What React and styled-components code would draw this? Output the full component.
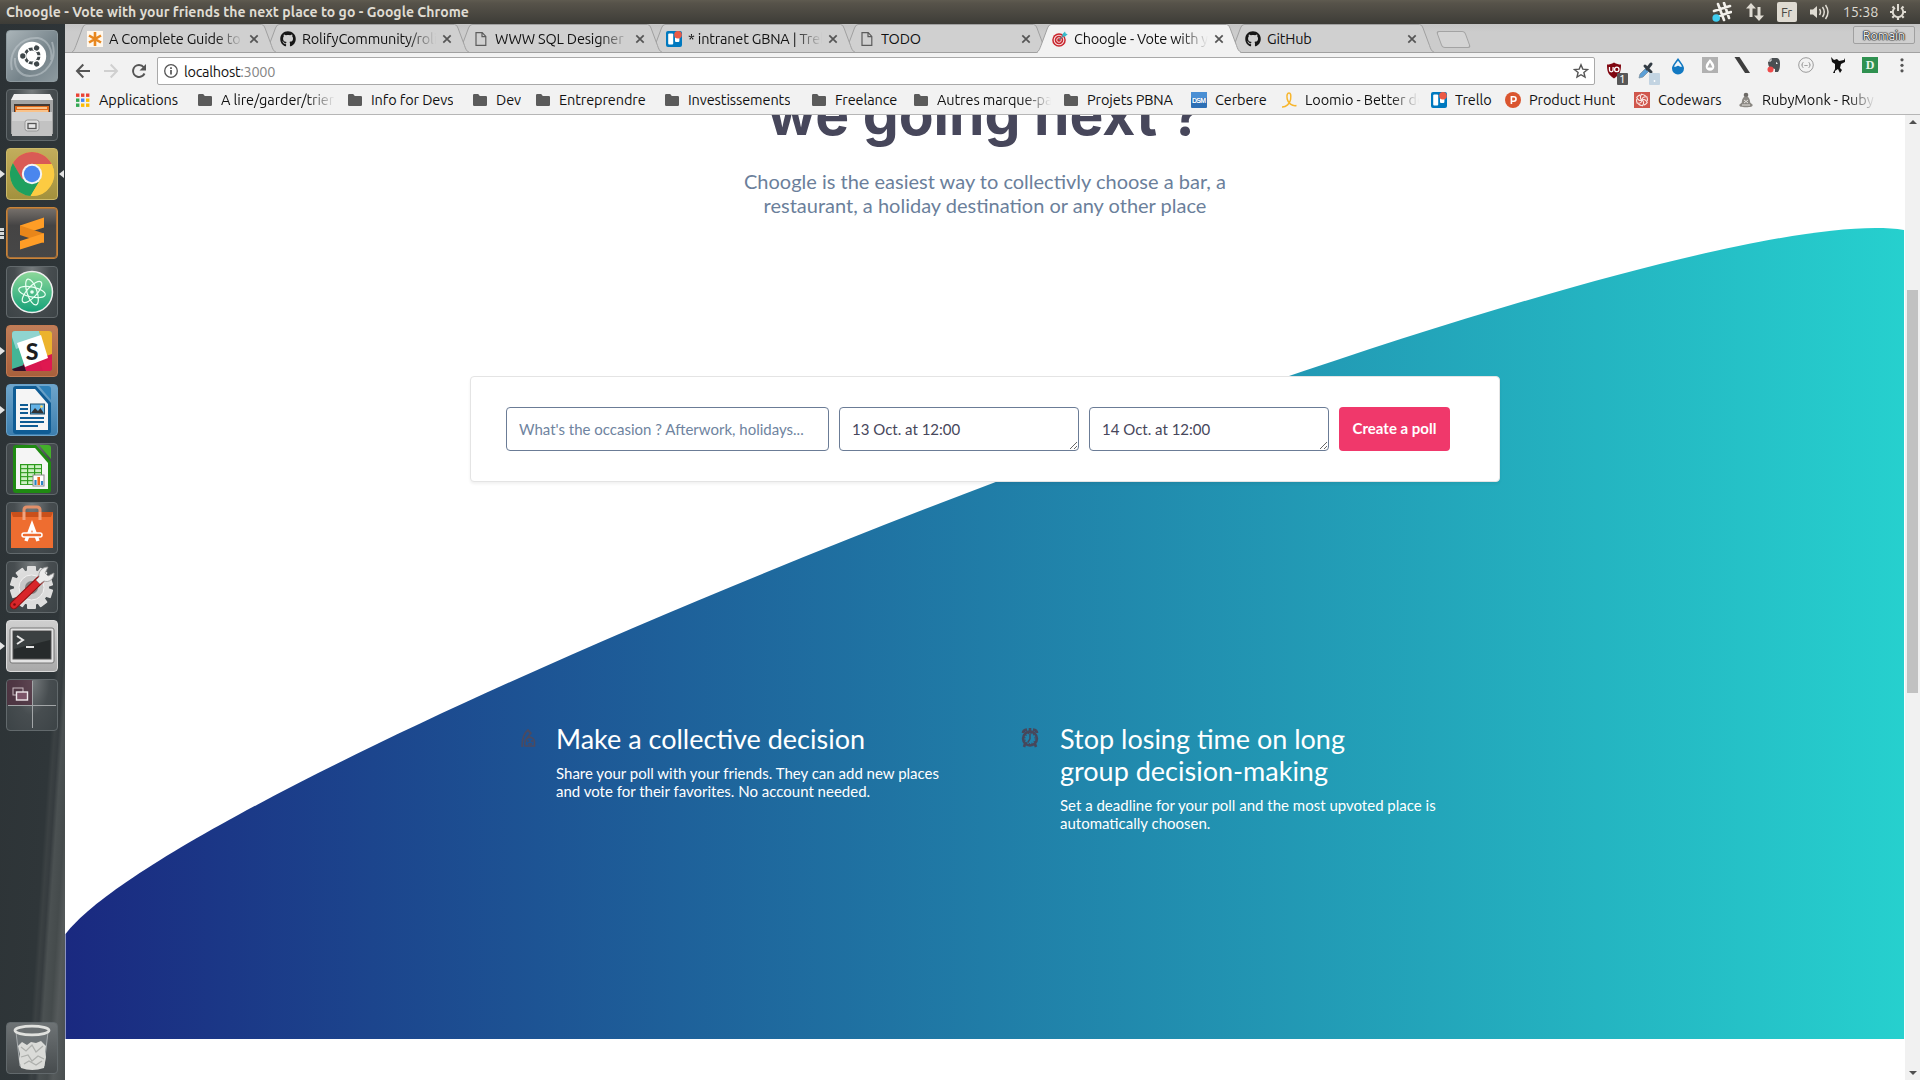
import React from "react";
import styled, { createGlobalStyle, css } from "styled-components";
import { FaGithub } from "react-icons/fa";

const ui = `"Ubuntu", "Noto Sans", "Open Sans", sans-serif`;
const body = `"Lato", "Open Sans", sans-serif`;

const Global = createGlobalStyle`
  * { box-sizing: border-box; }
  body { margin: 0; overflow: hidden; background: #fff; }
  h1, h2, p { margin: 0; font-weight: 400; }
  svg { display: block; flex: none; }
`;

const Screen = styled.div`
  width: 1920px;
  height: 1080px;
  display: flex;
  flex-direction: column;
  overflow: hidden;
  font-family: ${ui};
`;

/* ---------- top panel ---------- */
const Panel = styled.header`
  height: 24px;
  flex: none;
  display: flex;
  align-items: center;
  justify-content: space-between;
  padding: 0 7px 0 6px;
  background: linear-gradient(#5f5b50 0, #57534a 3px, #3d3c37 100%);
  color: #dfdbd2;
`;
const WindowTitle = styled.div`
  font-size: 14px;
  line-height: 24px;
  font-weight: 700;
  letter-spacing: 0.04px;
  white-space: nowrap;
`;
const Indicators = styled.div`
  display: flex;
  align-items: center;
  height: 24px;
`;
const Indicator = styled.div`
  width: ${(p) => p.$w}px;
  display: flex;
  justify-content: center;
  font-size: 14.5px;
  letter-spacing: -0.2px;
  line-height: 24px;
`;
const Lang = styled.span`
  width: 20px;
  height: 20px;
  border-radius: 2px;
  background: #dfdbd2;
  color: #4a4843;
  font-size: 13px;
  line-height: 20px;
  text-align: center;
`;

const Desktop = styled.div`
  flex: 1;
  min-height: 0;
  display: flex;
`;

/* ---------- launcher ---------- */
const Launcher = styled.nav`
  width: 65px;
  flex: none;
  display: flex;
  flex-direction: column;
  gap: 7px;
  padding: 6px 0;
  background: linear-gradient(93.86deg, #2c3235 0, #2f3639 98px, #3b4143 102px, #363c3f 106px, #4b5152 110px, #454b4c 118px, #555a5b 124px, #484e4f 136px);
`;
const Slot = styled.div`
  height: 52px;
  flex: none;
  display: grid;
  grid-template-columns: 6px 52px 7px;
  align-items: center;
  ${(p) => p.$last && css`margin-top: auto;`}
`;
const Tile = styled.div`
  width: 52px;
  height: 52px;
  border-radius: 4px;
  border: 1px solid ${(p) => p.$edge || "#62696c"};
  background: ${(p) => p.$bg || "radial-gradient(ellipse at 50% 0, #777c7e 0, #474d50 50%, #3c4346 100%)"};
  display: flex;
  align-items: center;
  justify-content: center;
  overflow: hidden;
`;
const Mark = styled.i`
  width: 0;
  height: 0;
  border: 4px solid transparent;
  ${(p) => (p.$side === "left" ? "border-left: 5px solid #e4e4e4; border-right: 0;" : "border-right: 5px solid #e4e4e4; border-left: 0; justify-self: center;")}
`;
const Ticks = styled.i`
  width: 4px;
  height: 11px;
  background: repeating-linear-gradient(#d5d8d9 0 3px, transparent 3px 4px);
`;

/* ---------- browser ---------- */
const Browser = styled.main`
  flex: 1;
  min-width: 0;
  display: flex;
  flex-direction: column;
  background: #f2f2f2;
`;
const TabStrip = styled.div`
  height: 29px;
  flex: none;
  display: flex;
  padding-left: 6px;
  background: linear-gradient(#c4c4c4, #cccccc 8px);
  box-shadow: inset 0 -1px 0 #a2a2a2;
`;
const TabBox = styled.div`
  width: 206px;
  height: 29px;
  flex: none;
  margin-right: -13px;
  display: grid;
  grid-template-areas: "all";
  z-index: ${(p) => p.$z};
`;
const TabShape = styled.svg`
  grid-area: all;
`;
const TabContent = styled.div`
  grid-area: all;
  display: flex;
  align-items: center;
  padding: 1px 0 0 16px;
  color: #111;
`;
const TabLabel = styled.span`
  width: 134px;
  margin-left: 6px;
  font-size: 14.5px;
  letter-spacing: ${(p) => p.$ls || "-0.2px"};
  line-height: 26px;
  white-space: nowrap;
  overflow: hidden;
  ${(p) => p.$fade && css`mask-image: linear-gradient(90deg, #000 106px, transparent 134px);`}
`;
const TabClose = styled.span`
  margin-left: 6px;
`;
const NewTab = styled.div`
  width: 29px;
  height: 17px;
  margin: 7px 0 0 17px;
  border: 1px solid #a3a3a3;
  border-radius: 3px;
  background: #d4d4d4;
  transform: skewX(20deg);
`;
const User = styled.div`
  width: 62px;
  height: 18px;
  margin: 2px 5px 0 auto;
  border: 1px solid #a0a0a0;
  border-radius: 2px;
  background: #d0d0d0;
  color: #f4f4f4;
  text-shadow: 0 0 1px #111, 0 0 1px #111, 0 0 2px #222, 0 0 1px #111;
  font-size: 12.5px;
  line-height: 16px;
  text-align: center;
`;

const Toolbar = styled.div`
  height: 33px;
  flex: none;
  display: flex;
  align-items: center;
  padding: 3px 0 0 10px;
`;
const NavButtons = styled.div`
  display: flex;
  gap: 12px;
  width: 82px;
`;
const Omnibox = styled.div`
  width: 1438px;
  height: 28px;
  border: 1px solid #a9a9a9;
  border-radius: 2px;
  background: #fff;
  display: flex;
  align-items: center;
  padding: 0 5px 0 5px;
  font-size: 14.5px;
  color: #111;
`;
const Url = styled.span`
  flex: 1;
  margin-left: 5px;
  letter-spacing: -0.3px;
  span { color: #858585; }
`;
const Extensions = styled.div`
  display: flex;
  margin-left: 3px;
`;
const Ext = styled.div`
  width: 32px;
  display: flex;
  justify-content: center;
`;

const Bookmarks = styled.div`
  height: 29px;
  flex: none;
  display: flex;
  align-items: center;
  padding: 0 0 1px 10px;
  border-bottom: 1px solid #b6b6b6;
  color: #111;
`;
const Bookmark = styled.div`
  width: ${(p) => p.$w}px;
  flex: none;
  display: flex;
  align-items: center;
  gap: 8px;
  font-size: 14.5px;
  line-height: 24px;
  letter-spacing: ${(p) => p.$ls || "-0.1px"};
`;
const BookmarkLabel = styled.span`
  width: ${(p) => (p.$fade ? "114px" : "auto")};
  overflow: hidden;
  white-space: nowrap;
  ${(p) => p.$fade && css`mask-image: linear-gradient(90deg, #000 86px, transparent 114px);`}
`;

/* ---------- page ---------- */
const Viewport = styled.div`
  flex: 1;
  min-height: 0;
  display: flex;
  background: #fff;
`;
const Page = styled.div`
  width: 1840px;
  display: grid;
  grid-template-areas: "page";
  overflow: hidden;
  font-family: ${body};
`;
const Wave = styled.svg`
  grid-area: page;
`;
const Content = styled.div`
  grid-area: page;
  display: flex;
  flex-direction: column;
  align-items: center;
  min-height: 0;
`;
const Title = styled.h1`
  font-family: "Inter", sans-serif;
  font-weight: 700;
  font-size: 57px;
  line-height: 60px;
  letter-spacing: 0;
  margin-top: -30px;
  color: #47475b;
  white-space: nowrap;
`;
const Lead = styled.p`
  margin-top: 24px;
  width: 500px;
  text-align: center;
  font-size: 20px;
  line-height: 24px;
  color: #6b7f9b;
`;
const Card = styled.form`
  margin-top: 159px;
  width: 1030px;
  height: 106px;
  flex: none;
  border: 1px solid #e4e4e4;
  border-radius: 4px;
  background: #fff;
  box-shadow: 0 2px 3px rgba(0, 0, 0, 0.06);
  display: flex;
  gap: 10px;
  padding: 30px 35px;
`;
const field = css`
  height: 44px;
  border: 1px solid #6b7c96;
  border-radius: 4px;
  background: #fff;
  padding: 0 12px;
  font-family: ${body};
  font-size: 15px;
  line-height: 42px;
  outline: 0;
`;
const Occasion = styled.input`
  ${field}
  width: 323px;
  &::placeholder { color: #6f84a0; opacity: 1; }
`;
const DateField = styled.textarea`
  ${field}
  width: 240px;
  color: #47475b;
  resize: both;
  overflow: hidden;
  margin: 0;
`;
const Submit = styled.button`
  width: 111px;
  height: 44px;
  border: 0;
  border-radius: 4px;
  background: #f0386b;
  color: #fff;
  padding: 0 0 1px;
  font: 700 15px/43px ${body};
`;
const Features = styled.section`
  margin-top: 241px;
  width: 930px;
  display: grid;
  grid-template-columns: 501px 1fr;
`;
const Feature = styled.article`
  display: grid;
  grid-template-columns: ${(p) => p.$icon}px 390px;
  color: #fff;
  > svg { margin-top: 5px; }
`;
const FeatureTitle = styled.h2`
  font-size: 27px;
  line-height: 32px;
  width: 360px;
`;
const FeatureText = styled.p`
  margin-top: 9px;
  font-size: 15px;
  line-height: 18px;
`;
const Scrollbar = styled.div`
  width: 15px;
  background: #f1f1f1;
  display: flex;
  flex-direction: column;
  align-items: center;
  justify-content: space-between;
  padding: 5px 0;
`;
const Thumb = styled.div`
  width: 11px;
  height: 403px;
  margin: 0 0 212px;
  background: #c1c1c1;
`;

/* ---------- small icons ---------- */
const FileIcon = () => (
  <svg width="16" height="16" viewBox="0 0 16 16" fill="none" stroke="#5c5c5c" strokeWidth="1.2">
    <path d="M3 1.6h6.2l3.6 3.8v9H3zM9 1.8v3.8h3.6" />
  </svg>
);
const Asterisk = () => (
  <svg width="16" height="16" viewBox="0 0 16 16">
    <rect width="16" height="16" fill="#fff7ec" />
    <path d="M8 1v14M2 4.5l12 7M14 4.5l-12 7" stroke="#e8871e" strokeWidth="2.6" />
  </svg>
);
const TrelloIcon = () => (
  <svg width="16" height="16" viewBox="0 0 16 16">
    <rect width="16" height="16" rx="2" fill="#0079bf" />
    <rect x="2.2" y="2.5" width="5" height="11" rx="1" fill="#fff" />
    <rect x="9" y="6" width="4.4" height="5" rx="1" fill="#fff" />
    <circle cx="12" cy="3.8" r="3.8" fill="#eb5a46" />
  </svg>
);
const DartIcon = () => (
  <svg width="16" height="16" viewBox="0 0 16 16">
    <circle cx="7" cy="9" r="6.8" fill="#c9252d" />
    <circle cx="7" cy="9" r="4.8" fill="none" stroke="#f5dede" strokeWidth="1.1" />
    <circle cx="7" cy="9" r="2.3" fill="none" stroke="#f5dede" strokeWidth="1" />
    <path d="M7 9l6-6" stroke="#6c7a80" strokeWidth="1.1" />
    <path d="M10.5 5.5V3L13 .6l.7 1.8 2 .8-2.5 2.3z" fill="#35bccb" />
  </svg>
);
const GitIcon = () => <FaGithub size={16} color="#161616" />;
const Cross = () => (
  <svg width="10" height="10" viewBox="0 0 10 10" stroke="#555" strokeWidth="1.7">
    <path d="M1.3 1.3l7.4 7.4M8.7 1.3L1.3 8.7" />
  </svg>
);
const Folder = () => (
  <svg width="16" height="16" viewBox="0 0 16 16">
    <path d="M1 3.2Q1 2 2.2 2h4l1.6 1.9h6q1.2 0 1.2 1.2v7.7q0 1.2-1.2 1.2H2.2Q1 14 1 12.8z" fill="#5b5b5b" />
  </svg>
);
const Apps = () => (
  <svg width="16" height="16" viewBox="0 0 16 16">
    {["#ea4335", "#ea4335", "#ea4335", "#34a853", "#4285f4", "#fbbc05", "#34a853", "#fbbc05", "#fbbc05"].map((c, i) => (
      <rect key={i} x={1 + (i % 3) * 5} y={1.5 + Math.floor(i / 3) * 5} width="3.4" height="3.4" fill={c} />
    ))}
  </svg>
);
const Dsm = () => (
  <svg width="16" height="16" viewBox="0 0 16 16">
    <rect width="16" height="16" rx="1" fill="#2d6fb5" />
    <rect width="16" height="6" rx="1" fill="#4a8fd4" />
    <text x="8" y="10.6" fontSize="7" fontWeight="700" fill="#fff" textAnchor="middle" fontFamily="Liberation Sans, sans-serif" textLength="14">DSM</text>
  </svg>
);
const Loomio = () => (
  <svg width="16" height="16" viewBox="0 0 16 16" fill="none" stroke="#f7b52c" strokeWidth="1.5">
    <path d="M1 15c4 .2 8-3.500 8.600-7.500C10.200 3 9.600.9 8 .9S5.400 3 6.200 7C7 11 11 14.500 15.500 13.600" />
  </svg>
);
const Ph = () => (
  <svg width="16" height="16" viewBox="0 0 16 16">
    <circle cx="8" cy="8" r="8" fill="#da552f" />
    <path d="M6.400 12V4.700h2.400a2.200 2.200 0 010 4.500H6.400" fill="none" stroke="#fff" strokeWidth="1.600" />
  </svg>
);
const Codewars = () => (
  <svg width="16" height="16" viewBox="0 0 16 16">
    <rect width="16" height="16" fill="#d0564c" />
    <g fill="none" stroke="#fbe8e5" strokeWidth="1.100">
      {[0, 60, 120, 180, 240, 300].map((a) => (
        <path key={a} transform={`rotate(${a} 8 8)`} d="M8 8c-2-1-2.200-3.500-.4-5.800 1.500.2 3 .8 4 1.800" />
      ))}
    </g>
  </svg>
);
const Monk = () => (
  <svg width="16" height="16" viewBox="0 0 16 16">
    <circle cx="8" cy="3" r="2.300" fill="#6d6a66" />
    <path d="M8 4.500c3 0 4 3 4.200 6l2.500 2.300c0 2-2 2.400-6.700 2.400s-6.700-.4-6.700-2.400l2.500-2.300c.2-3 1.200-6 4.200-6z" fill="#8b8883" />
    <path d="M6 8l4 3M10 8l-4 3M4 13h8" stroke="#e6e3de" strokeWidth="1" />
  </svg>
);

/* ---------- launcher icons ---------- */
const UbuntuIcon = () => (
  <svg width="52" height="52" viewBox="0 0 52 52">
    <g fill="none" stroke="#c8d0d3" strokeOpacity=".5" strokeWidth="2">
      <path d="M6 40C2 22 14 7 32 8c10 2 15 12 13 22M46 12c6 18-6 34-22 34C14 46 8 38 9 28" />
    </g>
    <circle cx="26" cy="26" r="14.200" fill="#fff" />
    <circle cx="26" cy="26" r="7" fill="none" stroke="#3f474a" strokeWidth="3" />
    {[60, 180, 300].map((a) => (
      <g key={a} transform={`rotate(${a} 26 26)`}>
        <circle cx="35.200" cy="26" r="3.300" fill="#3f474a" stroke="#fff" strokeWidth="1.300" />
      </g>
    ))}
    {[0, 120, 240].map((a) => (
      <path key={a} transform={`rotate(${a} 26 26)`} d="M30 26h6" stroke="#fff" strokeWidth="1.300" />
    ))}
  </svg>
);
const Drawer = () => (
  <svg width="44" height="48" viewBox="0 0 44 48">
    <path d="M4 4h36l3 5v34H1V9z" fill="#a5a5a5" />
    <path d="M4 3h36l3 6H1z" fill="#f0f0f0" />
    <path d="M4 13h36v10H4z" fill="#443a35" />
    <path d="M5 15h34v7H5z" fill="#e06a1b" />
    <path d="M7 17h30M6 20h32" stroke="#ffe0b0" strokeWidth="1.300" />
    <path d="M2 21h40v24H2z" fill="#c2c2c2" />
    <path d="M2 21h40v9H2z" fill="#d2d2d2" />
    <rect x="15" y="29" width="14" height="11" rx="2.500" fill="#dedede" stroke="#979797" />
    <rect x="18" y="32.500" width="8" height="5" fill="#e6e6e6" stroke="#555" strokeWidth="1.300" />
  </svg>
);
const ChromeIcon = () => (
  <svg width="46" height="46" viewBox="0 0 48 48">
    <circle cx="24" cy="24" r="23" fill="#fcc934" />
    <path d="M24 24L13.200 30.200 4.100 12.500A23 23 0 0143.900 12.500L44.500 13.500H24z" fill="#d95b55" />
    <path d="M4.100 12.500A23 23 0 0022.500 47L33.200 29.300 24 24l-10.200 5.500z" fill="#1fa05f" />
    <path d="M22.500 47A23 23 0 0044.500 13.500H24L33.500 28.500z" fill="#fccb42" />
    <circle cx="24" cy="24" r="10.600" fill="#f4f4f4" />
    <circle cx="24" cy="24" r="8.500" fill="#4a86ee" />
  </svg>
);
const SublimeIcon = () => (
  <svg width="50" height="50" viewBox="0 0 50 50">
    <path d="M13 17.500L37 9.500v10L13 27z" fill="#ff9d26" />
    <path d="M13 17.500l24 8v9.500L13 27z" fill="#e8861a" />
    <path d="M13 33l24-7.700V34L13 41.500z" fill="#ff9d26" />
  </svg>
);
const AtomIcon = () => (
  <svg width="46" height="46" viewBox="0 0 46 46">
    <defs>
      <linearGradient id="atom" x1="0" y1="0" x2="0" y2="1">
        <stop offset="0" stopColor="#8ed99a" />
        <stop offset="1" stopColor="#13a078" />
      </linearGradient>
    </defs>
    <circle cx="23" cy="23" r="20.500" fill="url(#atom)" stroke="#efefef" strokeWidth="1.500" />
    <g fill="none" stroke="#e9fff2" strokeWidth="1.200">
      <ellipse cx="23" cy="23" rx="13.500" ry="5" transform="rotate(12 23 23)" />
      <ellipse cx="23" cy="23" rx="13.500" ry="5" transform="rotate(72 23 23)" />
      <ellipse cx="23" cy="23" rx="13.500" ry="5" transform="rotate(132 23 23)" />
    </g>
    <circle cx="23" cy="23" r="1.800" fill="#e9fff2" />
  </svg>
);
const SlackIcon = () => (
  <svg width="40" height="40" viewBox="0 0 40 40">
    <defs><clipPath id="slk"><rect width="40" height="40" rx="3" /></clipPath></defs>
    <g clipPath="url(#slk)">
      <rect width="40" height="40" fill="#45b596" />
      <path d="M0 0h27l3 9-26 9-4-12z" fill="#8fd4d0" />
      <path d="M27 0h13v28l-5 1z" fill="#ecb32d" />
      <path d="M11 33l29-10v17H14z" fill="#d8174f" />
      <path d="M0 38l12-4 2 6H0z" fill="#34102b" />
      <path d="M40 28v12H31l-3-8z" fill="#df1850" />
      <path d="M5 12l24-8 7 23-23 9z" fill="#fff" />
    </g>
    <text x="20" y="28.500" fontSize="23" fontWeight="900" textAnchor="middle" fill="#1d1d1f" fontFamily="Lato, sans-serif">S</text>
  </svg>
);
const WriterIcon = ({ calc }) => {
  const c = calc ? "#1f8a12" : "#0f5c94";
  return (
    <svg width="42" height="50" viewBox="0 0 42 50">
      <path d="M2 4q0-3 3-3h20l15 17v28q0 3-3 3H5q-3 0-3-3z" fill={c} />
      <path d="M28 1h9q3 0 3 3v11z" fill={calc ? "#43b02a" : "#2d80b8"} />
      <path d="M5 4h19l13 15v26H5z" fill="#f5f5f5" />
      {calc ? (
        <g>
          <rect x="9" y="20" width="22" height="21" fill="#2c9a1c" />
          {[0, 1, 2, 3, 4].map((r) => [0, 1, 2].map((k) => (
            <rect key={`${r}${k}`} x={10.200 + k * 7} y={21.200 + r * 4} width="5.800" height="2.900" fill="#cdf0c3" />
          )))}
          <rect x="22" y="31" width="11" height="11" fill="#fff" stroke="#888" />
          <path d="M24.500 41v-5M31 41v-4" stroke="#2b84c6" strokeWidth="2.200" />
          <path d="M27.700 41v-8" stroke="#ef6b1e" strokeWidth="2.600" />
        </g>
      ) : (
        <g>
          <path d="M9 20h8M9 24h8M9 28h8M9 33h24M9 37h24M9 41h18" stroke="#0f5c94" strokeWidth="1.800" />
          <rect x="19.500" y="19" width="14" height="10" fill="#63b2e6" stroke="#20516f" />
          <path d="M20 28l4-5 3 3 2.500-3L33 28.500z" fill="#333" />
          <circle cx="30.500" cy="21.500" r="1.300" fill="#ffd75e" />
        </g>
      )}
    </svg>
  );
};
const SoftwareIcon = () => (
  <svg width="44" height="48" viewBox="0 0 44 48">
    <path d="M14 14V6q0-3 3-3h10q3 0 3 3v8" fill="none" stroke="#e2906a" strokeWidth="3" />
    <path d="M1 8h42v36H1z" fill="#ee6d30" />
    <path d="M1 8h42l-2 5H3z" fill="#c9501b" />
    <path d="M14 8v8M30 8v8" stroke="#f0a582" strokeWidth="3" />
    <path d="M16 37l6-16 6 16" fill="none" stroke="#fff" strokeWidth="3.500" />
    <rect x="12" y="29" width="20" height="4" rx="2" fill="#ee6d30" stroke="#fff" strokeWidth="1.500" />
  </svg>
);
const SettingsIcon = () => (
  <svg width="46" height="46" viewBox="0 0 46 46">
    {[0, 36, 72, 108, 144].map((a) => (
      <rect key={a} x="18" y="2" width="9" height="43" rx="1" fill="#dedede" transform={`rotate(${a} 22.500 23.500)`} />
    ))}
    <circle cx="22.500" cy="23.500" r="17.500" fill="#dcdcdc" />
    <circle cx="22.500" cy="23.500" r="12.500" fill="#c8c8c8" stroke="#f2f2f2" />
    <circle cx="22.500" cy="23.500" r="6.500" fill="#7d7d7d" />
    <path d="M5 41L32 15" stroke="#8d1010" strokeWidth="8.500" strokeLinecap="round" />
    <path d="M5 41L31 16" stroke="#d8262a" strokeWidth="6.500" strokeLinecap="round" />
    <path d="M30 13c-1-5 3-10 9-10l-3 6 3 3 6-3c0 6-5 10-10 8l-4 3-4-4z" fill="#ececec" stroke="#999" strokeWidth=".8" />
    <circle cx="5.500" cy="40.500" r="1.300" fill="#7d0d0d" />
  </svg>
);
const TerminalIcon = () => (
  <svg width="46" height="42" viewBox="0 0 46 42">
    <rect x="1" y="3" width="44" height="35" rx="2" fill="#e3e3e3" stroke="#777" />
    <rect x="4" y="6" width="38" height="28" fill="#272b2c" stroke="#555" />
    <path d="M5 7h36v8L5 24z" fill="#3b4041" />
    <path d="M8 11l6 4-6 4" fill="none" stroke="#e5e5e5" strokeWidth="2" />
    <path d="M17 22h8" stroke="#e5e5e5" strokeWidth="2" />
  </svg>
);
const WorkspaceIcon = () => (
  <svg width="50" height="50" viewBox="0 0 50 50">
    <rect width="25" height="25" fill="#532d3f" fillOpacity=".7" />
    <path d="M25.500 1v47M1 25.500h48" stroke="#a3a6a8" strokeWidth="1" />
    <rect x="6" y="8" width="10" height="7" fill="none" stroke="#c9bcc2" />
    <rect x="9.500" y="12" width="11" height="8" fill="#7c5468" stroke="#efe8ec" strokeWidth="1.400" />
  </svg>
);
const TrashIcon = () => (
  <svg width="40" height="48" viewBox="0 0 40 48">
    <path d="M4 8l4 34q12 5 24 0l4-34z" fill="#72787a" fillOpacity=".8" stroke="#b5babb" strokeWidth=".8" />
    <path d="M6 22l4-4 5 3 4-3 5 1 5-2 5 5-1 6 1 5-2 11q-12 4-23 0L7 35l1-5z" fill="#dadbd8" />
    <path d="M9 23l5 4 6-6 4 7 7-6M9 33l7-2 4 6 6-5 6 3M12 40l5-3 7 4 6-4" fill="none" stroke="#aeb0ad" strokeWidth="1.300" />
    <ellipse cx="20" cy="6.500" rx="17" ry="4.300" fill="#6a6f71" stroke="#e0e1de" strokeWidth="2.800" />
  </svg>
);

const apps = [
  { icon: <UbuntuIcon />, bg: "linear-gradient(135deg,#aab4b8,#75838a 60%,#8d9a9f)", edge: "#8e9a9f" },
  { icon: <Drawer /> },
  { icon: <ChromeIcon />, bg: "linear-gradient(#c2ad5c,#a3913d)", edge: "#cbb96a", mark: "left", focus: true },
  { icon: <SublimeIcon />, bg: "linear-gradient(#77716c,#454444 35%,#474747)", edge: "#c8843a; box-shadow: inset 0 0 0 1px #a8713a", mark: "ticks" },
  { icon: <AtomIcon /> },
  { icon: <SlackIcon />, bg: "linear-gradient(#c07d58,#a8603c)", edge: "#c27a52", mark: "left" },
  { icon: <WriterIcon />, bg: "linear-gradient(#6ea5cb,#3c7eae)", edge: "#69a1c8", mark: "left" },
  { icon: <WriterIcon calc /> },
  { icon: <SoftwareIcon /> },
  { icon: <SettingsIcon /> },
  { icon: <TerminalIcon />, bg: "linear-gradient(#cfcfcf,#a9a9a9)", edge: "#dadada", mark: "left" },
  { icon: <WorkspaceIcon /> },
  { icon: <TrashIcon />, last: true, bg: "linear-gradient(#6e7375,#474c4e)" },
];

const tabs = [
  { icon: <Asterisk />, label: "A Complete Guide to", fade: true },
  { icon: <GitIcon />, label: "RolifyCommunity/rolify", fade: true },
  { icon: <FileIcon />, label: "WWW SQL Designer", fade: true },
  { icon: <TrelloIcon />, label: "* intranet GBNA | Trello", fade: true },
  { icon: <FileIcon />, label: "TODO" },
  { icon: <DartIcon />, label: "Choogle - Vote with y", fade: true, active: true },
  { icon: <GitIcon />, label: "GitHub" },
];

const bookmarks = [
  [<Apps />, "Applications", 122],
  [<Folder />, "A lire/garder/trier", 150, true],
  [<Folder />, "Info for Devs", 125],
  [<Folder />, "Dev", 63],
  [<Folder />, "Entreprendre", 129],
  [<Folder />, "Investissements", 147],
  [<Folder />, "Freelance", 102],
  [<Folder />, "Autres marque-pages", 150, true],
  [<Folder />, "Projets PBNA", 128],
  [<Dsm />, "Cerbere", 90],
  [<Loomio />, "Loomio - Better deci", 150, true],
  [<TrelloIcon />, "Trello", 74],
  [<Ph />, "Product Hunt", 129],
  [<Codewars />, "Codewars", 104],
  [<Monk />, "RubyMonk - Ruby t", 140, true],
];

const extensions = [
  <svg width="28" height="28" viewBox="0 0 28 28">
    <path d="M14 5.500c2.500 1.500 4.500 2 7 2 0 7-1 10-7 14-6-4-7-7-7-14 2.500 0 4.500-.5 7-2z" fill="#800610" />
    <path d="M9.500 10v3q0 1.800 1.800 1.800t1.800-1.800v-3" fill="none" stroke="#fff" strokeWidth="1.300" />
    <circle cx="16.800" cy="12.400" r="2.200" fill="none" stroke="#fff" strokeWidth="1.300" />
    <rect x="17" y="16" width="11" height="12" rx="1" fill="#575757" />
    <text x="22.500" y="26" fontSize="11" fill="#fff" textAnchor="middle" fontFamily="Noto Sans, sans-serif">1</text>
  </svg>,
  <svg width="28" height="28" viewBox="0 0 28 28">
    <path d="M7 21l1-4 6-6 3 3-6 6z" fill="#5ba0d8" stroke="#7a8fa0" strokeWidth=".8" />
    <path d="M13 9l6 6M15 12l4-5" stroke="#333c44" strokeWidth="3" strokeLinecap="round" />
    <rect x="17" y="16" width="11" height="12" rx="1" fill="#c3d4e2" />
    <circle cx="22.500" cy="24" r=".9" fill="#fff" />
  </svg>,
  <svg width="16" height="18" viewBox="0 0 16 18">
    <path d="M8 1c3 4.500 6 7.300 6 10.500a6 6 0 01-12 0C2 8.300 5 5.500 8 1z" fill="#1279c2" />
    <path d="M8 3.800c1.500 2.200 3.300 4 4 6H4c.7-2 2.500-3.800 4-6z" fill="#eef6fb" />
    <path d="M6 10q2-2.500 4 0z" fill="#1279c2" />
  </svg>,
  <svg width="16" height="16" viewBox="0 0 16 16">
    <rect width="16" height="16" fill="#b1b1b1" />
    <path d="M8 2c2.600 3.500 4.300 5 4.300 7.400a4.300 4.300 0 01-8.600 0C3.700 7 5.400 5.500 8 2z" fill="#fff" />
    <path d="M8 5.500l2.500 5h-5z" fill="#b1b1b1" />
  </svg>,
  <svg width="16" height="16" viewBox="0 0 16 16"><path d="M.5 0h5L16 16h-5z" fill="#3e3e3e" /></svg>,
  <svg width="16" height="16" viewBox="0 0 16 16">
    <path d="M5 1h6q3 .5 3 6t-2 8H9v-3L5 11Q2 10 2 5z" fill="#4a4f52" />
    <path d="M2 4h3V1" fill="none" stroke="#f2f2f2" />
    <path d="M10 5l2 1.500-2 .5z" fill="#fff" />
    <circle cx="4.500" cy="12.500" r="3" fill="#ef4b4b" />
  </svg>,
  <svg width="16" height="16" viewBox="0 0 16 16" fill="none" stroke="#9b9b9b">
    <circle cx="8" cy="8" r="7.300" />
    <path d="M5.500 5.500q-1.500 0-1.200 1.500T3.500 8q1.200 0 .8 1.200t1.200 1.300M10.500 5.500q1.500 0 1.200 1.500t.8 1q-1.200 0-.8 1.200t-1.200 1.300M6.300 8.500h3.400" strokeWidth=".9" />
  </svg>,
  <svg width="16" height="16" viewBox="0 0 16 16" fill="#111">
    <path d="M1 0l3 3 3-1 2 2 5-1 1-2v4l-4 2-1 4 2 2-2 3-2-4-3 2v2H3l2-4 0-5-3-2z" />
  </svg>,
  <svg width="16" height="16" viewBox="0 0 16 16">
    <rect width="16" height="16" fill="#2f9150" />
    <text x="8" y="12.300" fontSize="12" fontWeight="700" fill="#e6f5ea" textAnchor="middle" fontFamily="Liberation Serif, serif">D</text>
  </svg>,
  <svg width="16" height="16" viewBox="0 0 16 16" fill="#555">
    <circle cx="8" cy="2.800" r="1.600" /><circle cx="8" cy="8.300" r="1.600" /><circle cx="8" cy="13.800" r="1.600" />
  </svg>,
];

const Tab = ({ icon, label, fade, active, z }) => (
  <TabBox $z={z}>
    <TabShape width="206" height="29" viewBox="0 0 206 29">
      <path
        d="M.5 28.500C3 27.500 4 24 5 21.500L11.500 4Q12.800.5 15 .5H190.500Q193 .5 194 4L200.500 21.500C201.500 24.500 202.500 27.500 205.500 28.500z"
        fill={active ? "#f2f2f2" : "#d0d0d0"}
      />
      <path
        d={`M.5 28.500C3 27.500 4 24 5 21.500L11.500 4Q12.800.5 15 .5H190.500Q193 .5 194 4L200.500 21.500C201.500 24.500 202.500 27.500 205.500 28.500${active ? "" : "z"}`}
        fill="none"
        stroke="#a0a0a0"
      />
      {active && <path d="M2 28.500h202" stroke="#f2f2f2" strokeWidth="1.400" />}
    </TabShape>
    <TabContent>
      {icon}
      <TabLabel $fade={fade}>{label}</TabLabel>
      <TabClose><Cross /></TabClose>
    </TabContent>
  </TabBox>
);

export default function App() {
  return (
    <Screen>
      <Global />
      <Panel>
        <WindowTitle>Choogle - Vote with your friends the next place to go - Google Chrome</WindowTitle>
        <Indicators>
          <Indicator $w={30}>
            <svg width="20" height="20" viewBox="0 0 20 20">
              <path d="M6 2l6 16M12 1l5 15M2 9l16-5M4 15l15-5" stroke="#f3f1ec" strokeWidth="2.600" strokeLinecap="round" />
              <circle cx="4.200" cy="16" r="3.800" fill="#3fcdf0" />
            </svg>
          </Indicator>
          <Indicator $w={35}>
            <svg width="18" height="18" viewBox="0 0 18 18" fill="#dfdbd2">
              <path d="M5 0l5 5.500H6.500V14h-3V5.500H0zM13 18l-5-5.500h3.500V4h3v8.500H18z" />
            </svg>
          </Indicator>
          <Indicator $w={29}><Lang>Fr</Lang></Indicator>
          <Indicator $w={37}>
            <svg width="20" height="16" viewBox="0 0 20 16">
              <path d="M0 5.500h3L7 2v12l-4-3.500H0z" fill="#dfdbd2" />
              <path d="M9.500 5q2 3 0 6M12.500 3q3.500 5 0 10M15.500 1q5 7 0 14" fill="none" stroke="#dfdbd2" strokeWidth="1.500" />
            </svg>
          </Indicator>
          <Indicator $w={45}>15:38</Indicator>
          <Indicator $w={30}>
            <svg width="18" height="18" viewBox="0 0 18 18" fill="none" stroke="#dfdbd2">
              <path d="M6 4.700a5.200 5.200 0 106 0" strokeWidth="2" />
              <path d="M9 1v7" strokeWidth="2" />
              <path d="M3.500 3.500l1.500 1.500M14.500 3.500L13 5M1 9h2.500M14.500 9H17M3.300 14.700L5 13M14.700 14.700L13 13M9 14.500V17" strokeWidth="2.200" />
            </svg>
          </Indicator>
        </Indicators>
      </Panel>

      <Desktop>
        <Launcher>
          {apps.map((a, i) => (
            <Slot key={i} $last={a.last}>
              {a.mark === "left" ? <Mark $side="left" /> : a.mark === "ticks" ? <Ticks /> : <span />}
              <Tile $bg={a.bg} $edge={a.edge}>{a.icon}</Tile>
              {a.focus && <Mark $side="right" />}
            </Slot>
          ))}
        </Launcher>

        <Browser>
          <TabStrip>
            {tabs.map((t, i) => <Tab key={i} {...t} z={t.active ? 20 : 10 - i} />)}
            <NewTab />
            <User>Romain</User>
          </TabStrip>

          <Toolbar>
            <NavButtons>
              <svg width="16" height="16" viewBox="0 0 16 16" fill="none" stroke="#555" strokeWidth="2"><path d="M15 8H2M8.300 1.500L2 8l6.300 6.500" /></svg>
              <svg width="16" height="16" viewBox="0 0 16 16" fill="none" stroke="#d0d0d0" strokeWidth="2"><path d="M1 8h13M7.700 1.500L14 8l-6.300 6.500" /></svg>
              <svg width="16" height="16" viewBox="0 0 16 16"><path d="M13.500 10.500A6 6 0 118 2q3 0 5 2.500" fill="none" stroke="#555" strokeWidth="2" /><path d="M15 1v6.500H8.500z" fill="#555" /></svg>
            </NavButtons>
            <Omnibox>
              <svg width="16" height="16" viewBox="0 0 16 16" fill="none" stroke="#555">
                <circle cx="8" cy="8" r="6.300" strokeWidth="1.300" />
                <path d="M8 7v4.500M8 4.300v1.600" strokeWidth="1.700" />
              </svg>
              <Url>localhost<span>:3000</span></Url>
              <svg width="16" height="16" viewBox="0 0 16 16" fill="none" stroke="#555" strokeWidth="1.400">
                <path d="M8 1.800l1.800 4.300 4.700.4-3.600 3 1.100 4.600L8 11.700l-4 2.400 1.100-4.600-3.600-3 4.700-.4z" />
              </svg>
            </Omnibox>
            <Extensions>{extensions.map((e, i) => <Ext key={i}>{e}</Ext>)}</Extensions>
          </Toolbar>

          <Bookmarks>
            {bookmarks.map(([icon, label, w, fade]) => (
              <Bookmark key={label} $w={w}>
                {icon}
                <BookmarkLabel $fade={fade}>{label}</BookmarkLabel>
              </Bookmark>
            ))}
          </Bookmarks>

          <Viewport>
            <Page>
              <Wave width="1840" height="965" viewBox="65 115 1840 965">
                <defs>
                  <linearGradient id="sea" gradientUnits="userSpaceOnUse" x1="65" y1="0" x2="1904" y2="0">
                    <stop offset="0" stopColor="#1a2980" />
                    <stop offset="1" stopColor="#26d0ce" />
                  </linearGradient>
                </defs>
                <path d="M65.500 934C200 760 1660 190 1904 230V1039H65.500z" fill="url(#sea)" />
              </Wave>
              <Content>
                <Title>we going next ?</Title>
                <Lead>Choogle is the easiest way to collectivly choose a bar, a restaurant, a holiday destination or any other place</Lead>
                <Card>
                  <Occasion placeholder="What's the occasion ? Afterwork, holidays..." />
                  <DateField readOnly value="13 Oct. at 12:00" />
                  <DateField readOnly value="14 Oct. at 12:00" />
                  <Submit type="button">Create a poll</Submit>
                </Card>
                <Features>
                  <Feature $icon={36}>
                    <svg width="16" height="20" viewBox="0 0 16 20" fill="none" stroke="#4b4a60" strokeWidth="1.600">
                      <path d="M2 19C2 11 4 5 8 2l3 3-4 5M8 2l2 3" />
                      <path d="M5 18c-1-5 1-8 5-9 4 1 5 3 4.500 9zM8 12v2M12 12v2M8 16h4" />
                    </svg>
                    <div>
                      <FeatureTitle>Make a collective decision</FeatureTitle>
                      <FeatureText>Share your poll with your friends. They can add new places<br />and vote for their favorites. No account needed.</FeatureText>
                    </div>
                  </Feature>
                  <Feature $icon={39}>
                    <svg width="18" height="20" viewBox="0 0 18 20">
                      <path d="M3 19l1-3M15 19l-1-3M2 5q0-3 4-3.500M16 5q0-3-4-3.500M9 0v3" stroke="#47475b" strokeWidth="2.600" />
                      <circle cx="9" cy="10.500" r="6.900" fill="none" stroke="#47475b" strokeWidth="2.600" />
                      <path d="M9 5.500v5.300L6.800 14.500" fill="none" stroke="#47475b" strokeWidth="1.500" />
                      <circle cx="9" cy="10.500" r="5.200" fill="none" stroke="#47475b" strokeWidth="1.400" strokeDasharray="1 1.720" />
                    </svg>
                    <div>
                      <FeatureTitle>Stop losing time on long group decision-making</FeatureTitle>
                      <FeatureText>Set a deadline for your poll and the most upvoted place is<br />automatically choosen.</FeatureText>
                    </div>
                  </Feature>
                </Features>
              </Content>
            </Page>
            <Scrollbar>
              <svg width="8" height="4" viewBox="0 0 8 4"><path d="M0 4l4-4 4 4z" fill="#505050" /></svg>
              <Thumb />
              <svg width="8" height="4" viewBox="0 0 8 4"><path d="M0 0l4 4 4-4z" fill="#505050" /></svg>
            </Scrollbar>
          </Viewport>
        </Browser>
      </Desktop>
    </Screen>
  );
}
